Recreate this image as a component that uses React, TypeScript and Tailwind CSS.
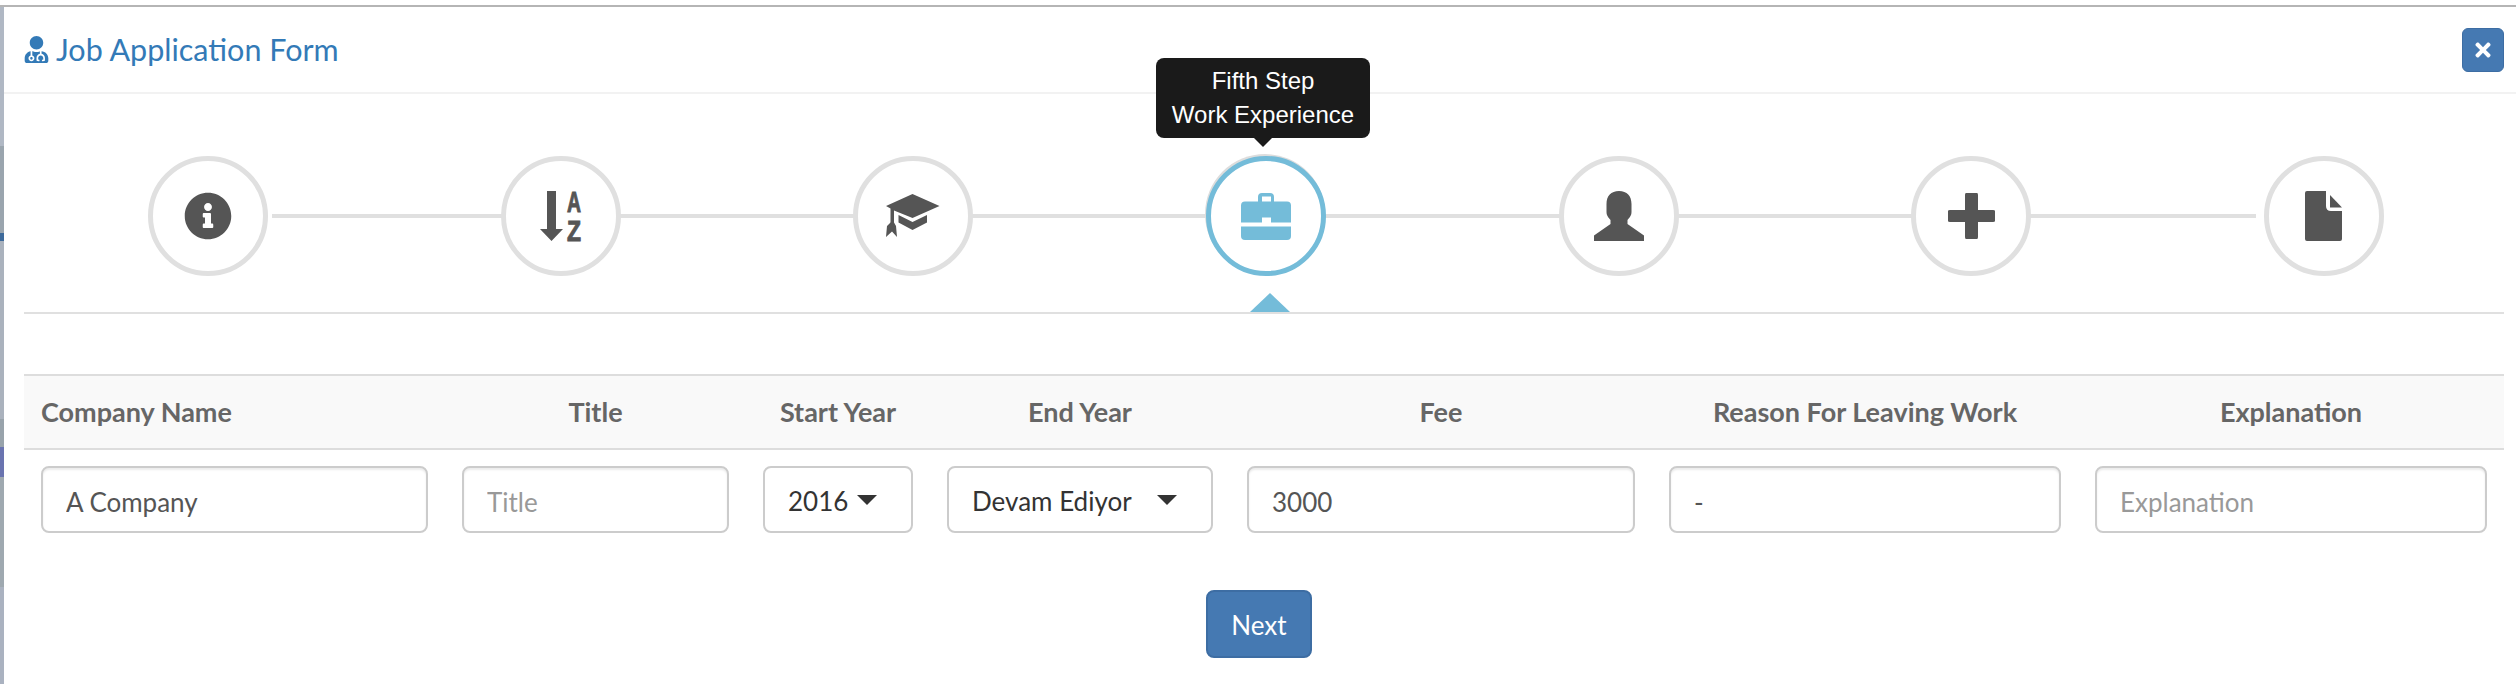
import React from "react";
import { FaInfoCircle, FaUserMd, FaTimes } from "react-icons/fa";

const font = { fontFamily: "Lato, 'Noto Sans', sans-serif" };

function SortAz() {
  return (
    <svg viewBox="0 0 41 50" className="h-[50px] w-[41px] overflow-visible" fill="#555">
      <path d="M7 0H16V38H23L11.5 50L0 38H7Z" />
      <text x="27" y="20.5" fontSize="29" fontWeight="700" stroke="#555" strokeWidth="1" textLength="14" lengthAdjust="spacingAndGlyphs" style={{ fontFamily: "'Liberation Sans', sans-serif" }}>A</text>
      <text x="27" y="50" fontSize="29" fontWeight="700" stroke="#555" strokeWidth="1" textLength="14" lengthAdjust="spacingAndGlyphs" style={{ fontFamily: "'Liberation Sans', sans-serif" }}>Z</text>
    </svg>
  );
}

function Cap() {
  return (
    <svg viewBox="0 0 54 44" className="h-[44px] w-[54px]" fill="#555">
      <path d="M0 12 26.5 0 53.5 12 26.5 24 8 16.5V29H4.5V14.5Z" />
      <path d="M12.5 21 26.5 28 41 21V28.5L26.5 36 12.5 28.5Z" />
      <path d="M0 43 1 32 4.5 28.5H8L10 32 11 43 6 37.5Z" />
    </svg>
  );
}

function Briefcase() {
  return (
    <svg viewBox="0 0 50 47" className="h-[47px] w-[50px]" fill="#74bcd9">
      <path d="M4 8.5H17V4Q17 0 21 0H29Q33 0 33 4V8.5H46Q50 8.5 50 12.5V29.5H30V24.5H21V29.5H0V12.5Q0 8.5 4 8.5ZM21 3.5V8.5H30V3.5Z" fillRule="evenodd" />
      <path d="M0 33.5H50V43Q50 47 46 47H4Q0 47 0 43Z" />
    </svg>
  );
}

function User() {
  return (
    <svg viewBox="0 0 50 50" className="h-[50px] w-[50px]" fill="#555">
      <path d="M25 0C33 0 37.5 5 37.5 13V21C37.5 25 35 27 33.5 29V33L50 44.5V50H0V44.5L16.5 33V29C15 27 12.5 25 12.5 21V13C12.5 5 17 0 25 0Z" />
    </svg>
  );
}

function Plus() {
  return (
    <svg viewBox="0 0 47 46" className="h-[46px] w-[47px]" fill="#555">
      <path d="M18 0H29Q30 0 30 2V17H45Q47 17 47 18V28Q47 29 45 29H30V44Q30 46 29 46H18Q17 46 17 44V29H2Q0 29 0 28V18Q0 17 2 17H17V2Q17 0 18 0Z" />
    </svg>
  );
}

function FileIcon() {
  return (
    <svg viewBox="0 0 37 50" className="h-[50px] w-[37px]" fill="#555">
      <path d="M2 0H21V15Q21 20 26 20H37V48Q37 50 35 50H2Q0 50 0 48V2Q0 0 2 0Z" />
      <path d="M25 4 37 16.5H25Z" />
    </svg>
  );
}

function Step({ children, active }: { children: React.ReactNode; active?: boolean }) {
  return (
    <div
      className={
        active
          ? "relative z-10 flex h-[120px] w-[120px] items-center justify-center rounded-full border-[5px] border-[#74bcd9] bg-white shadow-[-1px_-2px_0_#dddddd]"
          : "relative z-10 flex h-[120px] w-[120px] items-center justify-center rounded-full border-[5px] border-[#e0e0e0] bg-white"
      }
    >
      {children}
    </div>
  );
}

function Field({ value, placeholder }: { value?: string; placeholder?: string }) {
  return (
    <input
      readOnly
      value={value}
      placeholder={placeholder}
      className="h-[67px] w-full rounded-lg border-2 border-[#cccccc] bg-white px-[23px] pt-[4px] text-[26px] text-[#555] shadow-[inset_0_2px_2px_rgba(0,0,0,0.08)] outline-none placeholder:text-[#999]"
    />
  );
}

function Select({ value }: { value: string }) {
  return (
    <div className="flex h-[67px] w-full items-center justify-between rounded-lg border-2 border-[#cccccc] bg-white pl-[23px] pr-[34px] text-[26px] text-[#333]">
      <span className="pt-[4px]">{value}</span>
      <span className="h-0 w-0 border-x-[10px] border-t-[10px] border-x-transparent border-t-[#333]" />
    </div>
  );
}

const colClass = "grid grid-cols-[421px_301px_184px_300px_422px_426px_426px]";
const heads = ["Company Name", "Title", "Start Year", "End Year", "Fee", "Reason For Leaving Work", "Explanation"];
const strip: [number, string][] = [
  [139, "#b0b8c4"],
  [87, "#9aa5ae"],
  [8, "#3d6a9b"],
  [178, "#aab2bd"],
  [28, "#98a3ab"],
  [30, "#6a74b0"],
  [110, "#9fa9b0"],
  [97, "#aab2c0"],
];

export default function App() {
  return (
    <div className="flex h-[684px] w-full flex-col bg-white pt-[5px]" style={font}>
      <div className="flex flex-1 flex-col border-t-2 border-[#b5b5b5]">
        <div className="flex flex-1">
          <div className="flex w-[4px] flex-col">
            {strip.map(([h, c], i) => (
              <div key={i} style={{ height: h, backgroundColor: c }} />
            ))}
          </div>
          <div className="flex-1">
            <header className="flex h-[87px] items-center justify-between border-b-2 border-[#f2f2f2] pl-[20px] pr-[12px]">
              <h1 className="flex items-center gap-[7px] text-[30.5px] font-normal text-[#337ab7]">
                <FaUserMd className="h-[27px] w-[25px]" />
                <span>Job Application Form</span>
              </h1>
              <button className="flex h-[44px] w-[42px] items-center justify-center rounded-md border border-[#3d6da3] bg-[#4579b2] text-white">
                <FaTimes className="h-[22px] w-[20px]" />
              </button>
            </header>

            <div className="ml-[20px] mr-[12px]">
              <div className="relative h-[220px] border-b-2 border-[#e0e0e0]">
                <div className="absolute left-[248px] top-[120px] h-[4px] w-[1984px] bg-[#e0e0e0]" />
                <div
                  className="absolute left-[1132px] top-[-36px] z-20 flex h-[80px] w-[214px] flex-col items-center justify-center rounded-lg bg-[#1a1a1a] text-[24px] leading-[34px] text-white"
                  style={{ fontFamily: "'Liberation Sans', sans-serif" }}
                >
                  <span>Fifth Step</span>
                  <span>Work Experience</span>
                  <span className="absolute -bottom-[9px] left-1/2 h-0 w-0 -translate-x-1/2 border-x-[10px] border-t-[10px] border-x-transparent border-t-[#1a1a1a]" />
                </div>
                <div className="absolute bottom-0 left-[1226px] h-0 w-0 border-x-[20px] border-b-[19px] border-x-transparent border-b-[#74bcd9]" />
                <div className="flex justify-between pl-[124px] pr-[120px] pt-[62px]">
                  <Step><FaInfoCircle className="h-[48px] w-[48px] text-[#555]" /></Step>
                  <Step><SortAz /></Step>
                  <Step><Cap /></Step>
                  <Step active><Briefcase /></Step>
                  <Step><User /></Step>
                  <Step><Plus /></Step>
                  <Step><FileIcon /></Step>
                </div>
              </div>

              <div className="mt-[60px]">
                <div className={`${colClass} h-[76px] items-center border-y-2 border-[#dddddd] bg-[#f9f9f9] text-[27px] font-bold text-[#666]`}>
                  {heads.map((h, i) => (
                    <div key={h} className={i === 0 ? "px-[17px]" : "px-[17px] text-center"}>{h}</div>
                  ))}
                </div>
                <div className={`${colClass} pt-[16px]`}>
                  <div className="px-[17px]"><Field value="A Company" /></div>
                  <div className="px-[17px]"><Field placeholder="Title" /></div>
                  <div className="px-[17px]"><Select value="2016" /></div>
                  <div className="px-[17px]"><Select value="Devam Ediyor" /></div>
                  <div className="px-[17px]"><Field value="3000" /></div>
                  <div className="px-[17px]"><Field value="-" /></div>
                  <div className="px-[17px]"><Field placeholder="Explanation" /></div>
                </div>
                <div className="flex justify-center pr-[10px] pt-[57px]">
                  <button className="h-[68px] w-[106px] rounded-lg border-2 border-[#3d6da3] bg-[#4579b2] pt-[3px] text-[26px] text-white">Next</button>
                </div>
              </div>
            </div>
          </div>
        </div>
      </div>
    </div>
  );
}
